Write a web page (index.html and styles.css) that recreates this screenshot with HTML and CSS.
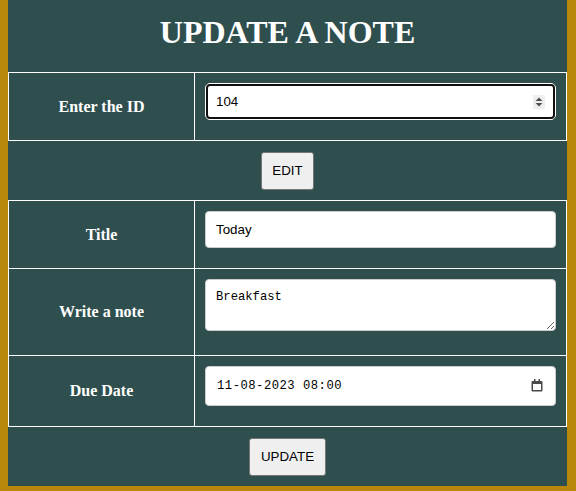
FILE: index.html
```html
<!DOCTYPE html>
<html lang="en">
<head>
<meta charset="utf-8">
<title>Update a note</title>
<link rel="stylesheet" href="styles.css">
</head>
<body>
<div class="page">
  <h1 class="heading">UPDATE A NOTE</h1>
  <table class="grid">
    <colgroup><col class="col-label"><col></colgroup>
    <tr>
      <th class="label">Enter the ID</th>
      <td class="field">
        <div class="control-wrap">
          <input class="control is-focused" type="number" value="104">
          <span class="spin" aria-hidden="true">
            <svg width="12" height="14" viewBox="0 0 12 14"><path d="M2.5 6 L6 2.5 L9.5 6 Z" fill="#505050"/><path d="M2.5 8 L6 11.5 L9.5 8 Z" fill="#505050"/></svg>
          </span>
        </div>
      </td>
    </tr>
  </table>
  <div class="actions"><button class="btn" type="button">EDIT</button></div>
  <table class="grid">
    <colgroup><col class="col-label"><col></colgroup>
    <tr>
      <th class="label">Title</th>
      <td class="field"><div class="control-wrap"><input class="control" type="text" value="Today"></div></td>
    </tr>
    <tr>
      <th class="label">Write a note</th>
      <td class="field"><div class="control-wrap note-wrap"><textarea class="control note">Breakfast</textarea></div></td>
    </tr>
    <tr>
      <th class="label">Due Date</th>
      <td class="field">
        <div class="control-wrap">
          <input class="control date" type="text" value="11-08-2023 08:00">
          <span class="cal" aria-hidden="true">
            <svg width="12" height="13" viewBox="0 0 12 13"><rect x="3" y="0" width="1.5" height="2" fill="#4a4a4a"/><rect x="7.5" y="0" width="1.5" height="2" fill="#4a4a4a"/><path d="M1.5 2 H10.5 A1 1 0 0 1 11.5 3 V11.5 A1 1 0 0 1 10.5 12.5 H1.5 A1 1 0 0 1 0.5 11.5 V3 A1 1 0 0 1 1.5 2 Z M2 5 V11 H10 V5 Z" fill="#4a4a4a" fill-rule="evenodd"/></svg>
          </span>
        </div>
      </td>
    </tr>
  </table>
  <div class="actions"><button class="btn" type="button">UPDATE</button></div>
</div>
</body>
</html>
```

FILE: styles.css
```css
html {
  background: #b8860b;
}

body {
  margin: 0 9px 5px 8px;
  font-family: "Liberation Serif", serif;
}

.page {
  background: #2f4f4f;
  padding-top: 14px;
}

.heading {
  margin: 0 0 21px;
  font-size: 32px;
  font-weight: bold;
  color: #fff;
  text-align: center;
  line-height: normal;
}

.grid {
  width: 100%;
  border-collapse: collapse;
  table-layout: fixed;
}

.col-label {
  width: 186px;
}

.grid th,
.grid td {
  border: 1px solid #fff;
}

.label {
  color: #fff;
  font-size: 16px;
  font-weight: bold;
  text-align: center;
  vertical-align: middle;
  padding: 0;
}

.field {
  padding: 10px;
  vertical-align: top;
}

.control-wrap {
  position: relative;
  margin-bottom: 10px;
}

.note-wrap {
  margin-bottom: 14px;
}

.control {
  display: block;
  box-sizing: border-box;
  width: 100%;
  margin: 0;
  padding: 10px;
  border: 1px solid #ccc;
  border-radius: 4px;
  background: #fff;
  color: #000;
  font-family: "Liberation Sans", Arial, sans-serif;
  font-size: 13.33px;
}

.control.is-focused {
  border-color: #fff;
  outline: 2px solid #101010;
  outline-offset: -3px;
  border-radius: 5px;
}

.control::-webkit-inner-spin-button,
.control::-webkit-outer-spin-button {
  -webkit-appearance: none;
  margin: 0;
}

.spin {
  position: absolute;
  right: 11px;
  top: 50%;
  margin-top: -7px;
  width: 12px;
  height: 14px;
  background: #efefef;
  display: flex;
}

.note {
  font-family: "Liberation Mono", monospace;
  font-size: 12.2px;
  height: 52px;
  resize: vertical;
}

.date {
  font-family: "Liberation Mono", monospace;
  font-size: 12.2px;
  letter-spacing: 0.5px;
  height: 40px;
  padding: 10px 11px;
}

.cal {
  position: absolute;
  right: 13px;
  top: 50%;
  margin-top: -7px;
  width: 12px;
  height: 13px;
  display: flex;
}

.actions {
  padding: 11px 0 10px;
  text-align: center;
}

.btn {
  font-family: "Liberation Sans", Arial, sans-serif;
  font-size: 13.33px;
  line-height: 16px;
  padding: 10px 10.5px;
  background: #efefef;
  color: #000;
  border: 1px solid #767676;
  border-radius: 3px;
}
```
